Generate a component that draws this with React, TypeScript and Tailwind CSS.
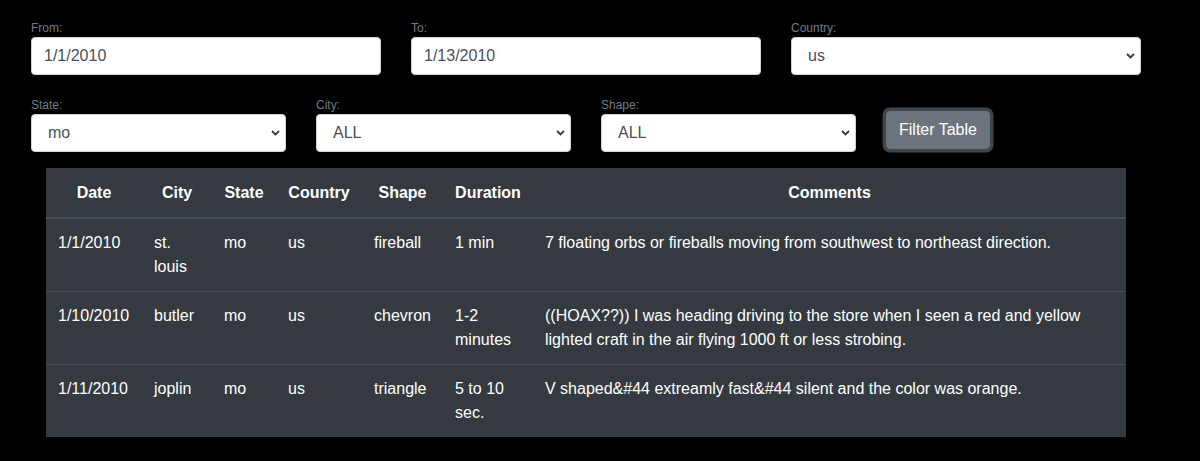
import React from 'react';

const rows = [
  { date: '1/1/2010', city: 'st. louis', state: 'mo', country: 'us', shape: 'fireball', duration: '1 min', comments: '7 floating orbs or fireballs moving from southwest to northeast direction.' },
  { date: '1/10/2010', city: 'butler', state: 'mo', country: 'us', shape: 'chevron', duration: '1-2 minutes', comments: '((HOAX??)) I was heading driving to the store when I seen a red and yellow lighted craft in the air flying 1000 ft or less strobing.' },
  { date: '1/11/2010', city: 'joplin', state: 'mo', country: 'us', shape: 'triangle', duration: '5 to 10 sec.', comments: 'V shaped&#44 extreamly fast&#44 silent and the color was orange.' },
];

const Label = ({ children }: { children: React.ReactNode }) => (
  <label className="block text-[12px] leading-[18px] text-[#6f7c8a]">{children}</label>
);

const TextField = ({ label, value }: { label: string; value: string }) => (
  <div className="w-[350px]">
    <Label>{label}</Label>
    <input
      readOnly
      value={value}
      className="block h-[38px] w-full rounded border border-[#ced4da] bg-white px-3 text-[16px] text-[#495057] outline-none"
    />
  </div>
);

const SelectField = ({ label, value, width }: { label: string; value: string; width: string }) => (
  <div className={width}>
    <Label>{label}</Label>
    <div className="relative">
      <select
        defaultValue={value}
        className="block h-[38px] w-full appearance-none rounded border border-[#ced4da] bg-white pl-4 pr-6 text-[16px] text-[#495057] outline-none"
      >
        <option value={value}>{value}</option>
      </select>
      {/* chevron */}
      <svg className="pointer-events-none absolute right-[6px] top-1/2 -translate-y-1/2" width="9" height="6" viewBox="0 0 9 6">
        <path d="M1 1l3.5 3.5L8 1" fill="none" stroke="#3a3a3a" strokeWidth="1.8" />
      </svg>
    </div>
  </div>
);

export default function App() {
  const cols = [
    { key: 'date', title: 'Date', w: 'w-[96px]' },
    { key: 'city', title: 'City', w: 'w-[70px]' },
    { key: 'state', title: 'State', w: 'w-[64px]' },
    { key: 'country', title: 'Country', w: 'w-[86px]' },
    { key: 'shape', title: 'Shape', w: 'w-[81px]' },
    { key: 'duration', title: 'Duration', w: 'w-[90px]' },
    { key: 'comments', title: 'Comments', w: 'w-[593px]' },
  ] as const;

  return (
    <div className="min-h-screen bg-black pt-[19px] font-['Liberation_Sans',Arial,sans-serif]">
      <div className="flex gap-[30px] pl-[31px]">
        <TextField label="From:" value="1/1/2010" />
        <TextField label="To:" value="1/13/2010" />
        <SelectField label="Country:" value="us" width="w-[350px]" />
      </div>

      <div className="mt-[21px] flex items-end gap-[30px] pl-[31px]">
        <SelectField label="State:" value="mo" width="w-[255px]" />
        <SelectField label="City:" value="ALL" width="w-[255px]" />
        <SelectField label="Shape:" value="ALL" width="w-[255px]" />
        <button className="mb-[3px] h-[38px] rounded border border-[#6c757d] bg-[#6c757d] px-3 text-[16px] text-white shadow-[0_0_0_3.5px_rgba(130,138,145,0.5)]">
          Filter Table
        </button>
      </div>

      <div className="mt-4 pl-[46px]">
        <table className="w-[1080px] table-fixed border-collapse bg-[#343a40] text-[16px] leading-6 text-white">
          <thead>
            <tr>
              {cols.map((c) => (
                <th key={c.key} className={`${c.w} border-t border-b-2 border-[#343a40] border-b-[#454d55] px-3 py-3 text-center font-bold`}>
                  {c.title}
                </th>
              ))}
            </tr>
          </thead>
          <tbody>
            {rows.map((r, i) => (
              <tr key={i}>
                {cols.map((c) => (
                  <td key={c.key} className="border-t border-[#454d55] px-3 py-3 align-top">
                    {r[c.key]}
                  </td>
                ))}
              </tr>
            ))}
          </tbody>
        </table>
      </div>
    </div>
  );
}
